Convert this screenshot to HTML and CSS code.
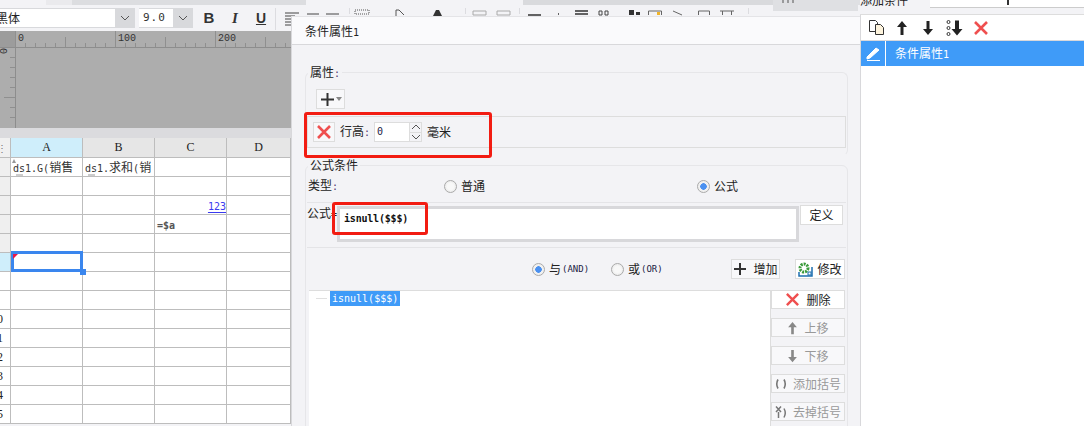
FILE: index.html
```html
<!DOCTYPE html>
<html lang="zh">
<head>
<meta charset="utf-8">
<title>条件属性</title>
<link rel="stylesheet" href="styles.css">
</head>
<body>
<svg class="sprite" aria-hidden="true">
  <symbol id="x" viewBox="0 0 16 16"><path d="M2 2 14 14M14 2 2 14" fill="none" stroke="#ef4f4f" stroke-width="2.6"/></symbol>
  <symbol id="up" viewBox="0 0 12 16"><path d="M6 1 1 7h3.5v8h3V7H11z"/></symbol>
  <symbol id="down" viewBox="0 0 12 16"><path d="M6 15 1 9h3.5V1h3v8H11z"/></symbol>
</svg>
<div class="app">
  <div class="workspace">
    <div class="strip">
      <span class="seg seg-a"></span><span class="seg seg-b"></span><span class="seg seg-c"></span><span class="seg seg-d"></span><span class="seg seg-e"></span><span class="seg seg-f"></span>
    </div>
    <div class="toolbar">
      <div class="select font-select"><span class="select-value">黑体</span><span class="select-arrow"><svg width="10" height="6" viewBox="0 0 10 6"><path d="M1 1l4 4 4-4" fill="none" stroke="#555"/></svg></span></div>
      <div class="select size-select"><span class="select-value mono">9.0</span><span class="select-arrow"><svg width="10" height="6" viewBox="0 0 10 6"><path d="M1 1l4 4 4-4" fill="none" stroke="#555"/></svg></span></div>
      <span class="fmt fmt-b">B</span><span class="fmt fmt-i">I</span><span class="fmt fmt-u">U</span>
      <svg class="tool-icons" width="583" height="26" viewBox="0 0 583 26">
        <rect x="498" y="-5" width="85" height="11" fill="#dfe0e3"/>
        <path d="M0.5 3v22M74.500 3v6M190.500 3v6M244.500 3v6M473.500 3v6" stroke="#dcdce0"/>
        <path d="M10 8h14M10 11h10M10 14h14M10 17h10M10 20h14M32 9h12M51 9h13" stroke="#444"/>
        <path d="M80 5h14v4H80z" fill="none" stroke="#555" stroke-dasharray="1 1"/>
        <path d="M121 11V5l3 0 5 5" fill="none" stroke="#555"/>
        <path d="M158 11l3-6h3l3 6z" fill="#333"/>
        <path d="M198 6h13v4h-13zM222 6h13v4h-13z" fill="none" stroke="#aaa"/>
        <path d="M253 10h13M283 9h1M300 6h13M300 9h13" stroke="#333" stroke-width="1.500"/>
        <path d="M324 6h3v4h-3zM330 6h3v4h-3z" fill="none" stroke="#444"/>
        <rect x="354" y="5" width="5" height="5" fill="#333"/><rect x="361" y="7" width="4" height="3" fill="#333"/>
        <path d="M373.500 10V6h13v4M398 6l9 4M423.500 10V6h11v4M445 6h14M447.500 6v4M456.500 6v4" fill="none" stroke="#666"/>
        <rect x="382" y="7" width="3" height="3" fill="#f0b429"/>
        <path d="M508 -5v3M513 -5v3M518 -5v3" stroke="#555"/>
      </svg>
    </div>
    <div class="sheet-area">
      <svg class="ruler" width="291" height="97" viewBox="0 0 291 97">
        <rect width="291" height="97" fill="#adadad"/>
        <rect width="16" height="17" fill="#9c9c9c"/>
        <path d="M0 16.500h291M15.500 0v97" stroke="#8d8d8d"/>
        <path class="tick-major" d="M15.500 0v16M115.500 0v16M215.500 0v16M65.500 6v10M165.500 6v10M265.500 6v10"/>
        <path class="tick-minor" d="M25.500 12v4M35.500 12v4M45.500 12v4M55.500 12v4M75.500 12v4M85.500 12v4M95.500 12v4M105.500 12v4M125.500 12v4M135.500 12v4M145.500 12v4M155.500 12v4M175.500 12v4M185.500 12v4M195.500 12v4M205.500 12v4M225.500 12v4M235.500 12v4M245.500 12v4M255.500 12v4M275.500 12v4M285.500 12v4"/>
        <path class="tick-minor" d="M10 26.500h5M10 36.500h5M10 46.500h5M10 56.500h5M4 66.500h11M10 76.500h5M10 86.500h5"/>
        <text class="ruler-num" x="18" y="10">0</text>
        <text class="ruler-num" x="118" y="10">100</text>
        <text class="ruler-num" x="218" y="10">200</text>
        <text class="ruler-num" transform="translate(7 23) rotate(-90)" x="0" y="0">0</text>
      </svg>
      <div class="band"></div>
      <div class="grid">
        <div class="corner">⋮</div><div class="col col-on">A</div><div class="col">B</div><div class="col">C</div><div class="col">D</div>

        <div class="rowh"></div>
        <div class="cell cell-text"><i class="star"></i><span class="mono">ds1.G(</span>销售<i class="mark"></i></div>
        <div class="cell cell-text"><span class="mono">ds1.</span>求和<span class="mono">(</span>销<i class="mark"></i></div>
        <div class="cell"></div><div class="cell"></div>

        <div class="rowh"></div><div class="cell"></div><div class="cell"></div><div class="cell"></div><div class="cell"></div>

        <div class="rowh"></div><div class="cell"></div><div class="cell"></div><div class="cell cell-link"><span class="mono link">123</span></div><div class="cell"></div>

        <div class="rowh"></div><div class="cell"></div><div class="cell"></div><div class="cell cell-text"><span class="mono formula">=$a</span></div><div class="cell"></div>

        <div class="rowh"></div><div class="cell"></div><div class="cell"></div><div class="cell"></div><div class="cell"></div>

        <div class="rowh rowh-on"></div><div class="cell cell-sel"><i class="corner-flag"></i><i class="handle"></i></div><div class="cell"></div><div class="cell"></div><div class="cell"></div>

        <div class="rowh rowh-w"></div><div class="cell"></div><div class="cell"></div><div class="cell"></div><div class="cell"></div>
        <div class="rowh rowh-w"></div><div class="cell"></div><div class="cell"></div><div class="cell"></div><div class="cell"></div>
        <div class="rowh rowh-w"><span>10</span></div><div class="cell"></div><div class="cell"></div><div class="cell"></div><div class="cell"></div>
        <div class="rowh rowh-w"><span>11</span></div><div class="cell"></div><div class="cell"></div><div class="cell"></div><div class="cell"></div>
        <div class="rowh rowh-w"><span>12</span></div><div class="cell"></div><div class="cell"></div><div class="cell"></div><div class="cell"></div>
        <div class="rowh rowh-w"><span>13</span></div><div class="cell"></div><div class="cell"></div><div class="cell"></div><div class="cell"></div>
        <div class="rowh rowh-w"><span>14</span></div><div class="cell"></div><div class="cell"></div><div class="cell"></div><div class="cell"></div>
        <div class="rowh rowh-w"><span>15</span></div><div class="cell"></div><div class="cell"></div><div class="cell"></div><div class="cell"></div>
      </div>
    </div>

    <section class="dialog">
      <header class="dialog-title">条件属性<span class="mono">1</span></header>
      <div class="dialog-body">
        <div class="group group-attr">
          <div class="legend">属性<span class="mono colon">:</span></div>
          <button class="plus-btn"><svg width="15" height="15" viewBox="0 0 15 15"><path d="M7.500 1v13M1 7.500h13" stroke="#333" stroke-width="2"/></svg><i class="caret"></i></button>
          <div class="attr-row">
            <span class="x-btn"><svg width="16" height="16"><use href="#x"/></svg></span>
            <span class="attr-label">行高<span class="mono colon">:</span></span>
            <span class="spinner">
              <span class="spin-input mono">0</span>
              <span class="spin-arrows">
                <span class="spin-arrow"><svg width="10" height="6" viewBox="0 0 10 6"><path d="M1 5l4-4 4 4" fill="none" stroke="#555"/></svg></span>
                <span class="spin-arrow"><svg width="10" height="6" viewBox="0 0 10 6"><path d="M1 1l4 4 4-4" fill="none" stroke="#555"/></svg></span>
              </span>
            </span>
            <span class="attr-unit">毫米</span>
          </div>
        </div>

        <div class="group group-formula">
          <div class="legend">公式条件</div>
          <div class="type-row">
            <span class="type-label">类型<span class="mono colon">:</span></span>
            <label class="opt opt-normal"><i class="radio"></i>普通</label>
            <label class="opt"><i class="radio radio-on"></i>公式</label>
          </div>
          <div class="formula-row">
            <span class="formula-label">公式<span class="mono">=</span></span>
            <div class="formula-box mono-bold">isnull($$$)</div>
            <button class="btn btn-define">定义</button>
          </div>
          <div class="logic-row">
            <label class="opt opt-and"><i class="radio radio-on"></i>与<span class="mono logic">(AND)</span></label>
            <label class="opt opt-or"><i class="radio"></i>或<span class="mono logic">(OR)</span></label>
            <button class="btn btn-add"><svg width="14" height="14" viewBox="0 0 14 14"><path d="M7 1v12M1 7h12" stroke="#333" stroke-width="2"/></svg>增加</button>
            <button class="btn btn-edit"><svg width="15" height="15" viewBox="0 0 15 15"><circle cx="6" cy="6" r="4" fill="none" stroke="#3a9a3a" stroke-width="3" stroke-dasharray="2 1"/><path d="M1 10v4h13V5" fill="none" stroke="#1c6fb0" stroke-width="1.500"/><rect x="10" y="10" width="3" height="3" fill="none" stroke="#1c6fb0"/></svg>修改</button>
          </div>
          <div class="list-row">
            <div class="tree"><i class="tree-line"></i><span class="tree-sel mono">isnull($$$)</span></div>
            <div class="side-btns">
              <button class="btn side-btn"><svg width="15" height="15"><use href="#x"/></svg>删除</button>
              <button class="btn side-btn is-off"><svg class="ic-off" width="11" height="14"><use href="#up"/></svg>上移</button>
              <button class="btn side-btn is-off"><svg class="ic-off" width="11" height="14"><use href="#down"/></svg>下移</button>
              <button class="btn side-btn is-off"><svg width="12" height="12" viewBox="0 0 12 12"><path d="M3 1.500Q.5 6 3 10.500M9 1.500Q11.500 6 9 10.500" fill="none" stroke="#777" stroke-width="1.600"/></svg>添加括号</button>
              <button class="btn side-btn is-off"><svg width="12" height="14" viewBox="0 0 12 14"><path d="M1 1.500 6 7M6 1.500 1 7M3.500 7v6M9 3.500Q11.500 8 9 12.500" fill="none" stroke="#777" stroke-width="1.500"/></svg>去掉括号</button>
            </div>
          </div>
        </div>
      </div>
      <i class="redbox redbox-row"></i>
      <i class="redbox redbox-formula"></i>
    </section>
  </div>

  <aside class="panel">
    <div class="panel-head"><span class="panel-label">添加条件</span><span class="panel-input"><i class="panel-caret"></i></span></div>
    <div class="panel-tools">
      <svg width="17" height="17" viewBox="0 0 17 17"><path d="M1.500 1.500h6l2 2v9h-8z" fill="#fff" stroke="#333"/><path d="M7.500 5.500h5l3 3v7h-8z" fill="#fdf3dc" stroke="#333"/></svg>
      <svg class="pt-up" width="12" height="16"><use href="#up"/></svg>
      <svg class="pt-down" width="12" height="16"><use href="#down"/></svg>
      <svg class="pt-all" width="17" height="16" viewBox="0 0 17 16"><circle cx="2.500" cy="2" r="1.500" fill="none" stroke="#333"/><circle cx="2.500" cy="8" r="1.500" fill="none" stroke="#333"/><circle cx="2.500" cy="14" r="1.500" fill="none" stroke="#333"/><path d="M11 15.500 5.500 9H9V.5h4V9h3.500z" fill="#222"/></svg>
      <svg class="pt-del" width="16" height="16"><use href="#x"/></svg>
    </div>
    <div class="panel-item">
      <span class="item-icon"><svg width="15" height="15" viewBox="0 0 15 15"><path d="M1 11 10 2l3 2-9 8-3 1zM1 14.500h13" fill="#fff" stroke="#fff"/></svg></span>
      <span class="item-text">条件属性<span class="mono">1</span></span>
    </div>
  </aside>
</div>
</body>
</html>
```
FILE: styles.css
```css
* { box-sizing: border-box; }
html, body { margin: 0; padding: 0; width: 1084px; height: 426px; overflow: hidden; }
body { font: 12px/16px "Noto Sans CJK SC", "Noto Sans", sans-serif; color: #222; background: #f3f3f6; }
i { display: block; font-style: normal; }
button { font: inherit; color: inherit; padding: 0; margin: 0; cursor: default; }
label { display: flex; align-items: center; }
svg { display: block; flex: none; }
.sprite { position: absolute; width: 0; height: 0; }
.mono { font-family: "DejaVu Sans Mono", "Liberation Mono", monospace; font-size: 10px; }
.mono-bold { font-family: "DejaVu Sans Mono", "Liberation Mono", monospace; font-size: 10px; font-weight: 700; letter-spacing: -.02em; }
.colon { color: #523a70; }

.app { display: flex; height: 426px; }
.workspace { position: relative; width: 860px; flex: none; overflow: hidden; }

.strip { display: flex; height: 5px; background: #f3f3f6; }
.seg { display: block; height: 5px; }
.seg-a { width: 46px; background: #f3f3f6; }
.seg-b { width: 26px; background: #eaeaed; }
.seg-c { width: 234px; background: #dcdde0; }
.seg-d { width: 217px; background: #f3f3f6; }
.seg-e { width: 252px; background: #d9dadd; }
.seg-f { width: 85px; background: #dfe0e3; }

.toolbar { display: flex; align-items: flex-start; height: 26px; background: #f3f3f6; }
.select { display: flex; height: 20px; margin-top: 3px; background: #d8d9dc; }
.font-select { width: 135px; }
.size-select { width: 54px; margin-left: 4px; }
.select-value { flex: 1; margin: 1px 0; background: #fff; line-height: 18px; overflow: hidden; white-space: nowrap; }
.font-select .select-value { text-indent: -4px; }
.size-select .select-value { padding-left: 4px; letter-spacing: 1px; color: #333; font-size: 11px; }
.select-arrow { display: flex; width: 20px; align-items: center; justify-content: center; }
.fmt { width: 26px; height: 20px; margin-top: 3px; text-align: center; line-height: 20px; color: #333; }
.fmt-b { margin-left: 3px; font: 700 15px/20px "Liberation Sans", sans-serif; }
.fmt-i { font: italic 700 15px/20px "Liberation Serif", serif; }
.fmt-u { font: 700 14px/20px "Liberation Sans", sans-serif; text-decoration: underline; }
.tool-icons { margin-left: 1px; overflow: visible; }

.sheet-area { width: 291px; }
.ruler { overflow: hidden; }
.tick-major { stroke: #8f8f8f; fill: none; }
.tick-minor { stroke: #8f8f8f; fill: none; }
.ruler-num { font: 10px "Liberation Mono", monospace; fill: #333; }
.band { height: 10px; background: #dbdbde; }

.grid { display: grid; grid-template-columns: 11px 72px 72px 72px 64px; grid-auto-rows: 19px; grid-template-rows: 20px; background: #fff; }
.corner, .col, .rowh, .cell { border-right: 1px solid #bdbdbd; border-bottom: 1px solid #bdbdbd; }
.corner { background: #f0f0f0; color: #777; font-size: 10px; line-height: 19px; overflow: hidden; text-indent: -3px; }
.col { background: #e6e6e6; text-align: center; font: 12px/19px "Liberation Serif", serif; }
.col-on { background: #cfeefb; }
.rowh { display: flex; justify-content: flex-end; padding-right: 7px; background: #efefef; font: 12px/18px "Liberation Serif", serif; overflow: hidden; white-space: nowrap; }
.rowh span { flex: none; }
.rowh-on { background: #cfeefb; }
.rowh-w { background: #fff; }
.cell { position: relative; background: #fff; }
.cell-text { padding-left: 2px; line-height: 18px; white-space: nowrap; overflow: hidden; color: #333; }
.cell-link { text-align: right; line-height: 17px; }
.link { color: #3a3af0; text-decoration: underline; text-underline-offset: 2px; }
.formula { color: #555; font-weight: 700; }
.star { position: absolute; left: 1px; top: 1px; width: 4px; height: 4px; background: #999; clip-path: polygon(50% 0, 100% 100%, 0 100%); }
.mark { position: absolute; left: 5px; bottom: 0; width: 7px; height: 2px; background: #ccc; }
.cell-sel { overflow: visible; z-index: 1; }
.cell-sel::before { content: ""; position: absolute; left: 0; right: -1px; top: -2px; bottom: -1px; border: 3px solid #3a86ee; }
.corner-flag { position: absolute; left: 2px; top: 1px; width: 5px; height: 5px; background: #e8184a; clip-path: polygon(0 0, 100% 0, 0 100%); }
.handle { position: absolute; left: 69px; top: 16px; width: 6px; height: 6px; background: #3a86ee; }

.dialog { position: absolute; left: 291px; top: 16px; right: 0; bottom: 0; background: #f3f3f6; border-left: 1px solid #d8d8db; border-top: 1px solid #e4e4e7; overflow: hidden; }
.dialog-title { height: 28px; padding-left: 13px; border-bottom: 1px solid #d8d8db; background: #fafafc; line-height: 27px; color: #222; }
.dialog-body { padding: 27px 12px 0 13px; }
.group { border: 1px solid #e6e6e9; border-radius: 6px; }
.group-attr { height: 84px; margin-bottom: 9px; border-bottom-color: transparent; }
.group-formula { height: 280px; }
.legend { width: fit-content; height: 16px; margin: -9px 0 0 2px; padding: 0 2px; background: #f3f3f6; }
.plus-btn { display: flex; align-items: center; gap: 1px; width: 29px; height: 20px; margin: 9px 0 0 10px; padding-left: 3px; background: #f8f8fa; border: 1px solid #ddd; }
.caret { width: 0; height: 0; border: 3px solid transparent; border-top: 4px solid #888; border-bottom: 0; }
.attr-row { display: flex; align-items: center; height: 32px; margin: 7px 1px 0 1px; border: 1px solid #ddd; padding-left: 5px; }
.x-btn { display: flex; align-items: center; justify-content: center; width: 22px; height: 20px; border: 1px solid #ddd; background: #f8f8fa; }
.attr-label { margin-left: 5px; }
.spinner { display: flex; height: 20px; margin-left: 4px; border: 1px solid #ddd; width: 48px; }
.spin-input { width: 34px; background: #fff; padding-left: 2px; line-height: 18px; color: #224; }
.spin-arrows { display: flex; flex-direction: column; flex: 1; }
.spin-arrow { display: flex; flex: 1; align-items: center; justify-content: center; border-left: 1px solid #ddd; }
.spin-arrow + .spin-arrow { border-top: 1px solid #ddd; }
.attr-unit { margin-left: 5px; }

.type-row { display: flex; align-items: center; height: 18px; margin-top: 4px; padding-left: 2px; }
.type-label { width: 136px; }
.opt-normal { width: 253px; }
.radio { width: 13px; height: 13px; margin-right: 4px; border-radius: 50%; border: 1px solid #aaa; background: radial-gradient(circle at 50% 50%, #f8f8f8 40%, #e2e2e2 100%); }
.radio-on { background: radial-gradient(circle, #4a90f0 0 3px, #f0f0f0 3.500px); }
.formula-row { display: flex; align-items: flex-start; height: 46px; margin: 7px 1px 0; border-top: 1px solid #e4e4e7; border-bottom: 1px solid #e4e4e7; }
.formula-label { width: 30px; margin-top: 2px; white-space: nowrap; }
.formula-box { width: 462px; height: 36px; margin-top: 3px; padding: 2px 0 0 4px; background: #fff; border: 3px solid #d8d8db; line-height: 15px; color: #111; }
.btn { display: flex; align-items: center; justify-content: center; gap: 6px; background: #fff; border: 1px solid #ddd; }
.btn-define { width: 43px; height: 20px; margin: 2px 0 0 1px; }
.logic-row { display: flex; align-items: center; height: 42px; padding: 0 0 0 226px; }
.logic { font-size: 9px; margin-left: 1px; color: #224; }
.opt-and { width: 79px; }
.opt-or { width: 120px; }
.btn-add { width: 49px; height: 20px; background: #f8f8fa; }
.btn-edit { width: 50px; height: 20px; margin-left: 15px; gap: 4px; }
.list-row { display: flex; padding-left: 3px; }
.tree { display: flex; align-items: flex-start; width: 461px; height: 140px; padding: 0 0 0 7px; background: #fff; border-top: 1px solid #ddd; }
.tree-line { width: 11px; height: 1px; margin: 7px 3px 0 0; background: #e0e0e0; }
.tree-sel { height: 15px; padding: 0 2px; background: #3f9bf8; color: #fff; line-height: 15px; }
.side-btns { display: flex; flex-direction: column; gap: 9px; width: 75px; height: 140px; border-left: 1px solid #ddd; }
.side-btn { height: 19px; width: 74px; }
.is-off { color: #999; background: #f8f8fa; }
.ic-off { fill: #888; }
.redbox { position: absolute; border: 3px solid #f21c12; border-radius: 3px; pointer-events: none; }
.redbox-row { left: 12px; top: 95px; width: 188px; height: 46px; }
.redbox-formula { left: 40px; top: 185px; width: 96px; height: 33px; }

.panel { flex: 1; display: flex; flex-direction: column; border-left: 1px solid #d8d8db; background: #fff; }
.panel-head { display: flex; height: 15px; background: #f3f3f6; border-bottom: 1px solid #ddd; overflow: hidden; margin-left: -1px; }
.panel-label { width: 70px; margin-top: -8px; white-space: nowrap; }
.panel-input { position: relative; flex: 1; height: 8px; background: #fff; border-bottom: 1px solid #ccc; }
.panel-caret { position: absolute; left: 77px; top: 0; width: 2px; height: 5px; background: #333; }
.panel-tools { display: flex; align-items: center; height: 26px; padding-left: 7px; border-bottom: 1px solid #d8d8db; fill: #222; }
.pt-up { margin-left: 11px; }
.pt-down { margin-left: 14px; }
.pt-all { margin-left: 12px; }
.pt-del { margin-left: 10px; }
.panel-item { display: flex; align-items: center; height: 25px; background: #3f9bf8; color: #fff; }
.item-icon { display: flex; align-items: center; justify-content: center; width: 25px; height: 25px; border-right: 1px solid #fff; }
.item-text { margin-left: 9px; }
```
